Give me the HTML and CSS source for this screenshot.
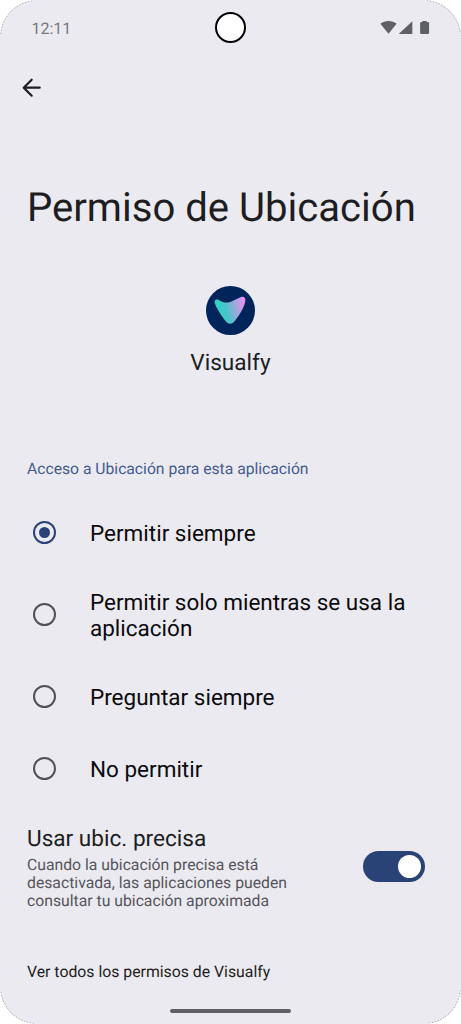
FILE: index.html
```html
<!DOCTYPE html>
<html lang="es">
<head>
<meta charset="utf-8">
<title>Permiso de Ubicación</title>
<link rel="stylesheet" href="styles.css">
</head>
<body>
<div class="screen">
  <svg class="corners" width="461" height="1024" viewBox="0 0 461 1024" fill="none" stroke="#77777c" stroke-width=".8" stroke-dasharray="1.200 1.800">
    <path d="M.5 34A37 37 0 0 1 34 .5M427 .5A37 37 0 0 1 460.500 34M460.500 990A37 37 0 0 1 427 1023.500M34 1023.500A37 37 0 0 1 .5 990"/>
  </svg>
  <header class="status">
    <span class="clock">12:11</span>
    <span class="camera"></span>
    <svg class="status-icons" width="50" height="16" viewBox="0 0 50 16" fill="#5f6066">
      <path d="M0.4 3.7C4.9 0 12.1 0 16.6 3.7L8.5 13.7Z"/>
      <path d="M32.3 1.2V14H18.7Z"/>
      <path d="M42.4 2V.9h4.2V2h1.2q1.3 0 1.3 1.3v9.5q0 1.3-1.3 1.3h-6.400q-1.300 0-1.300-1.300V3.300Q40.100 2 41.400 2Z"/>
    </svg>
  </header>
  <nav class="toolbar">
    <svg width="20" height="20" viewBox="0 0 20 20" fill="none" stroke="#1d1d22" stroke-width="2.200" stroke-linecap="round" stroke-linejoin="round"><path d="M17.700 9.700H2M9.700 1.700L1.700 9.700L9.700 17.700"/></svg>
  </nav>
  <h1 class="title">Permiso de Ubicación</h1>
  <section class="app">
    <svg width="49" height="50" viewBox="0.500 -.5 49 50">
      <defs><linearGradient id="mark" x1="10" y1="24" x2="39" y2="17" gradientUnits="userSpaceOnUse"><stop offset="0" stop-color="#2fd4c4"/><stop offset=".35" stop-color="#47c5cb"/><stop offset=".68" stop-color="#a0a6dc"/><stop offset="1" stop-color="#e991f0"/></linearGradient></defs>
      <circle cx="25" cy="25" r="24.500" fill="#00255a"/>
      <path d="M9.300 18C8.300 14.900 10.700 13.100 13.300 14.500C18.500 17.800 23.500 17.700 27.500 15.200L35.500 11.500C38.600 10.500 40.500 12.700 39.700 16C38.400 22.500 34 29.500 29.500 35.200C26.500 39.300 22.500 39 19.800 35.200C15.500 29.500 11.500 23.500 9.300 18Z" fill="url(#mark)"/>
    </svg>
    <span class="app-name">Visualfy</span>
  </section>
  <h2 class="section-label">Acceso a Ubicación para esta aplicación</h2>
  <div class="options">
    <div class="option"><span class="radio selected"></span><span class="label">Permitir siempre</span></div>
    <div class="option tall"><span class="radio"></span><span class="label">Permitir solo mientras se usa la<br>aplicación</span></div>
    <div class="option"><span class="radio"></span><span class="label">Preguntar siempre</span></div>
    <div class="option"><span class="radio"></span><span class="label">No permitir</span></div>
  </div>
  <section class="precise">
    <div>
      <div class="precise-title">Usar ubic. precisa</div>
      <div class="precise-text">Cuando la ubicación precisa está<br>desactivada, las aplicaciones pueden<br>consultar tu ubicación aproximada</div>
    </div>
    <span class="switch"><span class="thumb"></span></span>
  </section>
  <a class="all">Ver todos los permisos de Visualfy</a>
  <div class="home"></div>
</div>
</body>
</html>
```
FILE: styles.css
```css
* { box-sizing: border-box; }
body { margin: 0; background: #fff; font-family: Roboto, sans-serif; color: #1d1d22; text-rendering: geometricPrecision; }
.screen { position: relative; width: 461px; height: 1024px; overflow: hidden; border-radius: 37px; background: #ebeaf0; display: flex; flex-direction: column; white-space: nowrap; }
.corners { position: absolute; inset: 0; }
.status { height: 56px; flex: none; padding: 0 31px; display: grid; grid-template-columns: 1fr 31px 1fr; align-items: center; }
.clock { font-size: 16px; color: #77777c; padding-left: .5px; }
.camera { width: 31px; height: 31px; margin-bottom: 1px; border: 2px solid #000; border-radius: 50%; background: #fff; }
.status-icons { justify-self: end; }
.toolbar { height: 64px; flex: none; padding: 22px 0 0 22px; }
.title { margin: 64px 0 0 27px; height: 48px; flex: none; font-size: 40.1px; line-height: 48px; font-weight: 400; }
.app { margin-top: 53px; height: 100px; flex: none; display: flex; flex-direction: column; align-items: center; }
.app-name { margin-top: 13px; font-size: 22.6px; line-height: 30px; }
.section-label { margin: 74px 0 0 27px; height: 20px; flex: none; font-size: 15.7px; line-height: 20px; font-weight: 400; color: #445c8e; }
.options { margin-top: 17px; flex: none; color: #0b0b0e; }
.option { height: 72px; padding-left: 33px; display: flex; align-items: center; gap: 34px; }
.option.tall { height: 92px; }
.radio { width: 23px; height: 23px; flex: none; border: 2.5px solid #505057; border-radius: 50%; }
.selected { border-color: #2a4376; display: grid; place-items: center; }
.selected::after { content: ""; width: 11px; height: 11px; border-radius: 50%; background: #2a4376; }
.label { font-size: 22.5px; line-height: 26.5px; padding-top: 4.5px; }
.precise { margin-top: 21px; height: 87px; flex: none; padding: 0 36px 0 27px; display: flex; justify-content: space-between; }
.precise-title { font-size: 22.6px; line-height: 28px; }
.precise-text { margin-top: 2.5px; font-size: 15.75px; line-height: 18.4px; color: #55555b; }
.switch { width: 62px; height: 31px; margin-top: 26px; border-radius: 16px; background: #2a4376; padding: 4px; display: flex; justify-content: flex-end; }
.thumb { width: 23px; height: 23px; border-radius: 50%; background: #fff; }
.all { margin: 50px 0 0 27px; height: 20px; flex: none; font-size: 15.8px; line-height: 20px; }
.home { width: 121px; height: 4px; flex: none; margin: 27px auto 0; border-radius: 2px; background: #5f6066; }
```
